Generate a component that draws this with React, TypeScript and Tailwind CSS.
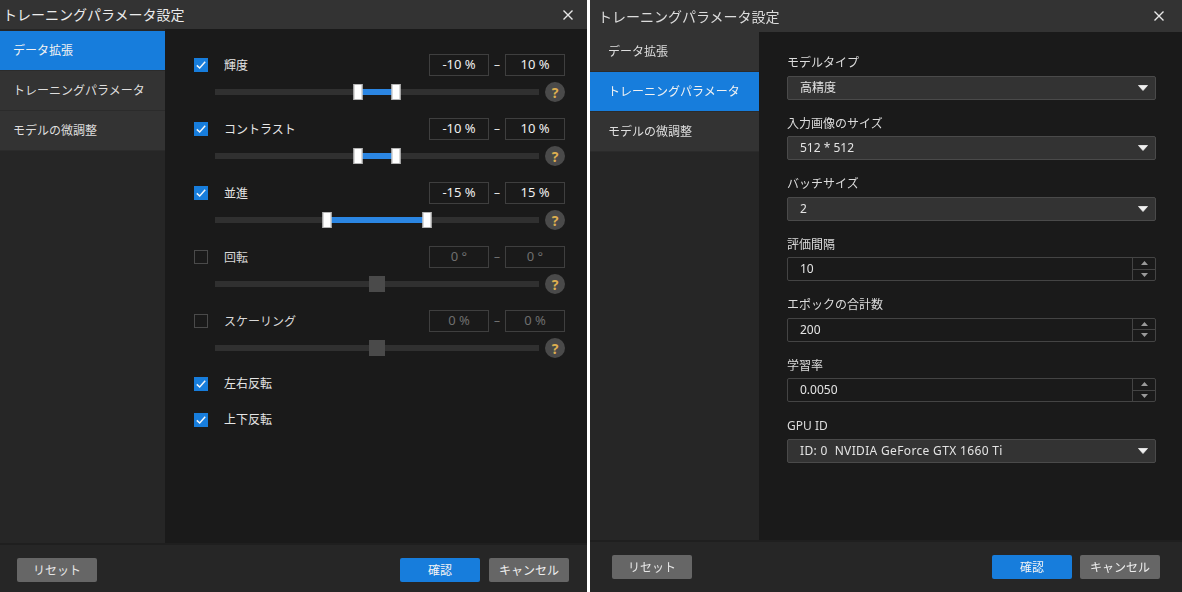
import React from "react";

const FONT = "font-['Noto_Sans','Noto_Sans_CJK_JP',sans-serif]";

function Close() {
  return (
    <svg width="12" height="12" viewBox="0 0 12 12" fill="none" stroke="#e8e8e8" strokeWidth="1.4">
      <path d="M1.5 1.5 L10.5 10.5 M10.5 1.5 L1.5 10.5" />
    </svg>
  );
}

function Shell({
  active,
  right,
  children,
}: {
  active: number;
  right?: boolean;
  children: React.ReactNode;
}) {
  const items = ["データ拡張", "トレーニングパラメータ", "モデルの微調整"];
  return (
    <div className={right ? "w-[592px] h-[592px] flex flex-col bg-[#1a1a1a] blur-[0.35px]" : "w-[587px] h-[592px] flex flex-col bg-[#1a1a1a]"}>
      <div
        className={
          right
            ? "h-[32px] bg-[#333333] flex items-center justify-between pl-[8px] pr-[17px] text-[14px] text-[#dcdcdc]"
            : "h-[29px] bg-[#333333] flex items-center justify-between pl-[3px] pr-[13px] text-[14px] text-[#ececec]"
        }
      >
        <span>トレーニングパラメータ設定</span>
        <Close />
      </div>
      <div className="flex-1 flex min-h-0">
        <div className={right ? "w-[169px] bg-[#262626] pt-0" : "w-[165px] bg-[#262626] pt-[2px]"}>
          {items.map((t, i) => (
            <div
              key={t}
              className={
                (i === active ? "bg-[#177ddc] text-[#f2f2f2] " : "bg-[#333333] text-[#dedede] ") +
                (right ? "h-[40px] pl-[18px] " : "h-[40px] pl-[13px] pt-[1px] ") +
                "flex items-center text-[12px] border-b border-[#2b2b2b]"
              }
            >
              {t}
            </div>
          ))}
        </div>
        <div className="flex-1 min-w-0">{children}</div>
      </div>
      <div className={right ? "h-[52px] bg-[#262626] border-t-2 border-[#1f1f1f] flex items-start pt-[13px] pl-[22px] pr-[22px]" : "h-[49px] bg-[#262626] border-t-2 border-[#1f1f1f] flex items-start pt-[13px] pl-[17px] pr-[18px]"}>
        <button className={(right ? "pt-[1px] " : "pt-[2px] ") + "w-[80px] h-[24px] rounded-[2px] bg-[#666666] text-[#e6e6e6] text-[12px]"}>リセット</button>
        <div className="flex-1" />
        <button className={(right ? "pt-[1px] " : "pt-[2px] ") + "w-[80px] h-[24px] rounded-[2px] bg-[#177ddc] text-[#f4f4f4] text-[12px]"}>確認</button>
        <button className={(right ? "ml-[8px] pt-[1px] " : "ml-[9px] pt-[2px] ") + "w-[80px] h-[24px] rounded-[2px] bg-[#666666] text-[#eeeeee] text-[12px]"}>キャンセル</button>
      </div>
    </div>
  );
}

function Check({ on }: { on: boolean }) {
  return on ? (
    <span className="w-[14px] h-[14px] bg-[#177ddc] flex items-center justify-center">
      <svg width="12" height="12" viewBox="0 0 12 12" fill="none" stroke="#f2f6fa" strokeWidth="1.5">
        <path d="M1.8 6.4 L4.7 9 L10.2 2.8" />
      </svg>
    </span>
  ) : (
    <span className="w-[14px] h-[14px] border border-[#4a4a4a] bg-[#1a1a1a]" />
  );
}

function Range({
  label,
  lo,
  hi,
  enabled,
  from,
  to,
}: {
  label: string;
  lo: string;
  hi: string;
  enabled: boolean;
  from?: number;
  to?: number;
}) {
  const txt = enabled ? "text-[#f0f0f0]" : "text-[#6f6f6f]";
  const box = "w-[60px] h-[22px] border border-[#3f3f3f] flex items-center justify-center text-[13px] " + txt;
  return (
    <div className="h-[64px] pl-[29px] pr-[22px]">
      <div className="h-[22px] flex items-center">
        <Check on={enabled} />
        <span className={"ml-[16px] pt-[2px] flex-1 text-[12px] " + (enabled ? "text-[#e6e6e6]" : "text-[#d8d8d8]")}>{label}</span>
        <span className={box}>{lo}</span>
        <span className={"w-[16px] text-center text-[12px] " + (enabled ? "text-[#e0e0e0]" : "text-[#6f6f6f]")}>–</span>
        <span className={box}>{hi}</span>
      </div>
      <div className="h-[26px] pl-[21px] mt-[3px] flex items-center">
        <div className="relative w-[324px] h-[6px] bg-[#303030]">
          {enabled ? (
            <>
              <div
                className="absolute top-0 h-[6px] bg-[#2b86e3]"
                style={{ left: from, width: (to as number) - (from as number) }}
              />
              <div className="absolute top-[-5px] w-[9px] h-[16px] bg-white border border-[#b4b4b4] -translate-x-1/2" style={{ left: from }} />
              <div className="absolute top-[-5px] w-[9px] h-[16px] bg-white border border-[#b4b4b4] -translate-x-1/2" style={{ left: to }} />
            </>
          ) : (
            <div className="absolute top-[-5px] left-[154px] w-[16px] h-[16px] bg-[#4a4a4a]" />
          )}
        </div>
        <span className="ml-[6px] w-[20px] h-[20px] rounded-full bg-[#4a4a4a] text-[#dcae50] font-bold text-[14px] flex items-center justify-center">?</span>
      </div>
    </div>
  );
}

function Flip({ label }: { label: string }) {
  return (
    <div className="h-[36px] pl-[29px] flex items-center">
      <Check on />
      <span className="ml-[16px] text-[12px] text-[#e6e6e6]">{label}</span>
    </div>
  );
}

function Arrow() {
  return (
    <svg width="10" height="6" viewBox="0 0 10 6">
      <path d="M0.5 0.5 H9.5 L5 5.5 Z" fill="#f0f0f0" stroke="#f0f0f0" strokeLinejoin="round" strokeWidth="0.8" />
    </svg>
  );
}

function Field({ label, children }: { label: string; children: React.ReactNode }) {
  return (
    <div className="h-[60.5px]">
      <div className="h-[17px] pt-[2px] flex items-center text-[12px] text-[#dcdcdc]">{label}</div>
      <div className="mt-[5px]">{children}</div>
    </div>
  );
}

function Select({ value, wide }: { value: string; wide?: boolean }) {
  return (
    <div className="h-[24px] w-[369px] rounded-[2px] bg-[#333333] border border-[#4a4a4a] flex items-center justify-between pl-[12px] pr-[7px] text-[12px] text-[#e4e4e4]">
      <span className={wide ? "whitespace-pre tracking-[0.34px]" : "whitespace-pre"}>{value}</span>
      <Arrow />
    </div>
  );
}

function Num({ value }: { value: string }) {
  return (
    <div className="h-[24px] w-[369px] rounded-[2px] border border-[#444444] flex text-[12px] text-[#e4e4e4]">
      <div className="flex-1 flex items-center pl-[12px]">{value}</div>
      <div className="w-[23px] border-l border-[#444444] flex flex-col">
        <div className="flex-1 border-b border-[#444444] flex items-center justify-center">
          <svg width="7" height="4" viewBox="0 0 7 4"><path d="M0 4 H7 L3.5 0 Z" fill="#9a9a9a" /></svg>
        </div>
        <div className="flex-1 flex items-center justify-center">
          <svg width="7" height="4" viewBox="0 0 7 4"><path d="M0 0 H7 L3.5 4 Z" fill="#9a9a9a" /></svg>
        </div>
      </div>
    </div>
  );
}

export default function App() {
  return (
    <div className={FONT + " w-[1182px] h-[592px] bg-white flex justify-between overflow-hidden"}>
      <Shell active={0}>
        <div className="pt-[25px]">
          <Range label="輝度" lo="-10 %" hi="10 %" enabled from={143} to={181} />
          <Range label="コントラスト" lo="-10 %" hi="10 %" enabled from={143} to={181} />
          <Range label="並進" lo="-15 %" hi="15 %" enabled from={112} to={212} />
          <Range label="回転" lo="0 °" hi="0 °" enabled={false} />
          <Range label="スケーリング" lo="0 %" hi="0 %" enabled={false} />
          <div className="-mt-[8px]">
            <Flip label="左右反転" />
            <Flip label="上下反転" />
          </div>
        </div>
      </Shell>
      <Shell active={1} right>
        <div className="pt-[21.5px] pl-[28px]">
          <Field label="モデルタイプ"><Select value="高精度" /></Field>
          <Field label="入力画像のサイズ"><Select value="512 * 512" /></Field>
          <Field label="バッチサイズ"><Select value="2" /></Field>
          <Field label="評価間隔"><Num value="10" /></Field>
          <Field label="エポックの合計数"><Num value="200" /></Field>
          <Field label="学習率"><Num value="0.0050" /></Field>
          <Field label="GPU ID"><Select wide value="ID: 0  NVIDIA GeForce GTX 1660 Ti" /></Field>
        </div>
      </Shell>
    </div>
  );
}
